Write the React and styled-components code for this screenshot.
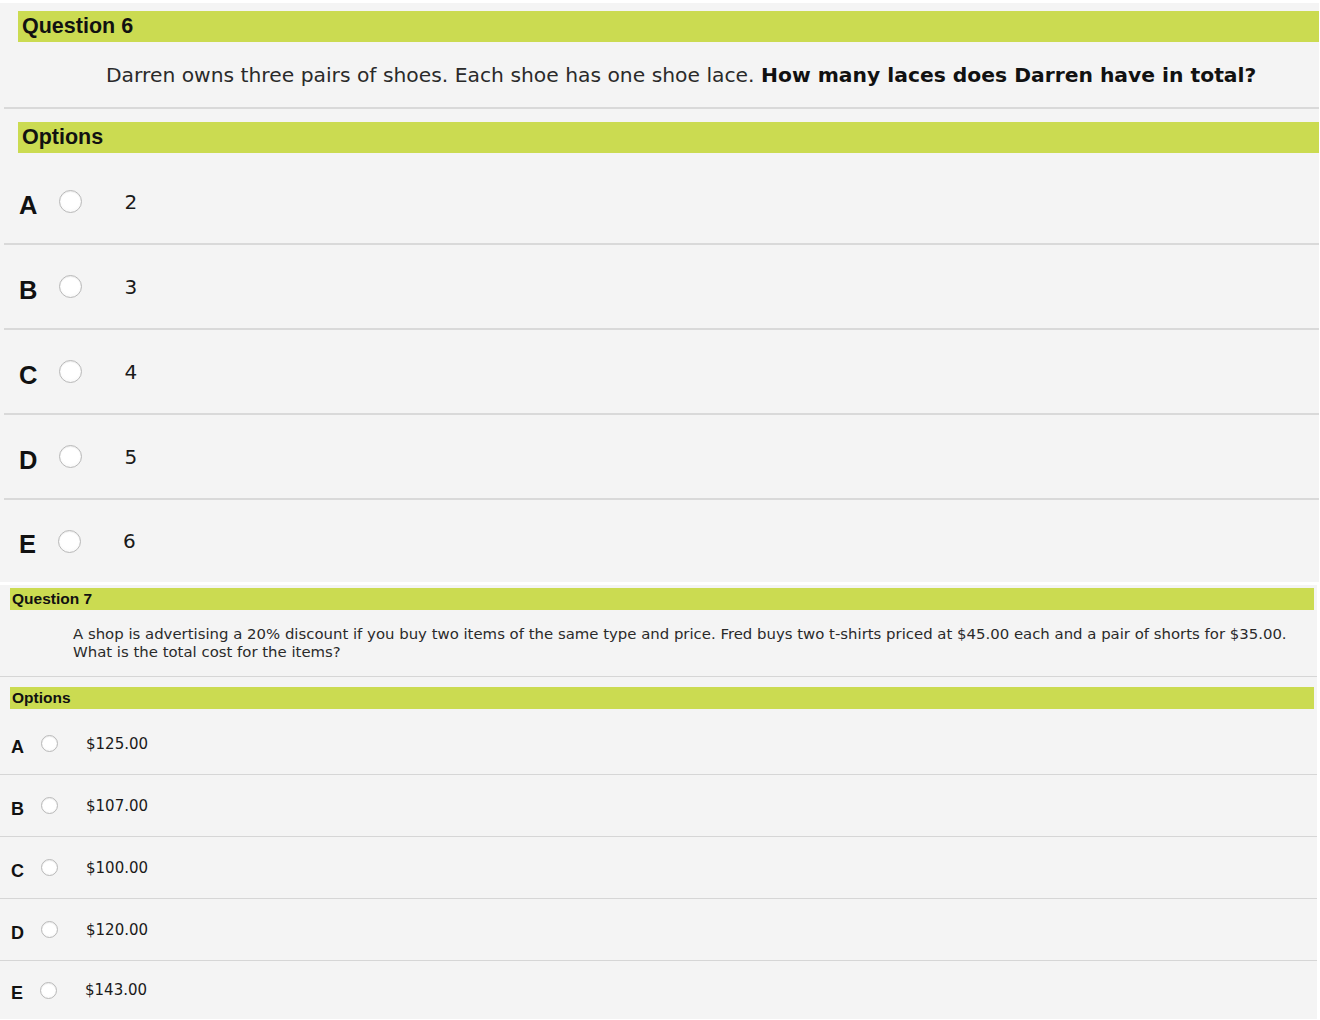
import React from "react";
import styled, { createGlobalStyle } from "styled-components";

const Global = createGlobalStyle`
  html, body { margin: 0; padding: 0; background: #ffffff; }
  body { width: 1320px; overflow: hidden; }
`;

const BIG = {
  right: 1, padTop: 8,
  barLeft: 18, barRight: 0, barH: 31, barFont: 21.5, barPad: 4,
  promptH: 67, promptPad: 106, promptFont: 20.3, promptLine: 24, promptPadT: 1, promptPadB: 0,
  lineInset: 4, lineW: 2, lineColor: "#d9d9d9",
  optGap: 13, listGap: 7,
  rowH: 85, lastRowH: 82,
  letterFont: 25.5, letterLeft: 19, letterShift: 8, letterGap: 22,
  radio: 23, radioGap: 42, valueFont: 20,
};

const SMALL = {
  right: 3, padTop: 3,
  barLeft: 10, barRight: 3, barH: 22, barFont: 15.5, barPad: 2,
  promptH: null, promptPad: 73, promptFont: 14.9, promptLine: 18, promptPadT: 15, promptPadB: 15,
  lineInset: 0, lineW: 1, lineColor: "#d6d6d6",
  optGap: 10, listGap: 4,
  rowH: 62, lastRowH: 58,
  letterFont: 18, letterLeft: 11, letterShift: 6, letterGap: 17,
  radio: 17, radioGap: 28, valueFont: 15,
};

const Page = styled.div`
  display: flex;
  flex-direction: column;
  gap: 3px;
  padding-top: 3px;
`;

const Panel = styled.section`
  background: #f4f4f4;
  margin-right: ${(p) => p.$m.right}px;
  padding-top: ${(p) => p.$m.padTop}px;
  display: flex;
  flex-direction: column;
`;

const Bar = styled.div`
  background: #cbdb51;
  height: ${(p) => p.$m.barH}px;
  margin-left: ${(p) => p.$m.barLeft}px;
  margin-right: ${(p) => p.$m.barRight}px;
  padding-left: ${(p) => p.$m.barPad}px;
  display: flex;
  align-items: center;
  font-family: "Liberation Sans", Arial, sans-serif;
  font-weight: 700;
  font-size: ${(p) => p.$m.barFont}px;
  color: #111;
`;

const PromptWrap = styled.div`
  margin-left: ${(p) => p.$m.lineInset}px;
  border-bottom: ${(p) => p.$m.lineW}px solid ${(p) => p.$m.lineColor};
  ${(p) => (p.$m.promptH ? `height: ${p.$m.promptH}px;` : "")}
  padding: ${(p) => p.$m.promptPadT}px 0 ${(p) => p.$m.promptPadB}px
    ${(p) => p.$m.promptPad - p.$m.lineInset}px;
  display: flex;
  align-items: center;
  box-sizing: border-box;
`;

const PromptText = styled.p`
  margin: 0;
  font-family: "DejaVu Sans", Verdana, sans-serif;
  font-size: ${(p) => p.$m.promptFont}px;
  line-height: ${(p) => p.$m.promptLine}px;
  color: #2a2a2a;
  white-space: nowrap;
  strong { color: #111; }
`;

const OptionsBar = styled(Bar)`
  margin-top: ${(p) => p.$m.optGap}px;
`;

const List = styled.div`
  margin-top: ${(p) => p.$m.listGap}px;
  display: flex;
  flex-direction: column;
`;

const Row = styled.label`
  display: flex;
  align-items: center;
  box-sizing: border-box;
  height: ${(p) => p.$m.rowH}px;
  margin-left: ${(p) => p.$m.lineInset}px;
  padding-left: ${(p) => p.$m.letterLeft - p.$m.lineInset}px;
  border-bottom: ${(p) => p.$m.lineW}px solid ${(p) => p.$m.lineColor};
  &:last-child {
    border-bottom: none;
    height: ${(p) => p.$m.lastRowH}px;
  }
`;

const Letter = styled.span`
  font-family: "Liberation Sans", Arial, sans-serif;
  font-weight: 700;
  font-size: ${(p) => p.$m.letterFont}px;
  color: #111;
  padding-top: ${(p) => p.$m.letterShift}px;
  margin-right: ${(p) => p.$m.letterGap}px;
  line-height: 1;
`;

const Radio = styled.span`
  width: ${(p) => p.$m.radio}px;
  height: ${(p) => p.$m.radio}px;
  box-sizing: border-box;
  border-radius: 50%;
  border: 1px solid #b9b9b9;
  background: radial-gradient(circle at 50% 40%, #ffffff 55%, #f1f1f1 100%);
  box-shadow: inset 0 1px 1px rgba(0, 0, 0, 0.08);
  margin-right: ${(p) => p.$m.radioGap}px;
  flex: none;
`;

const Value = styled.span`
  font-family: "DejaVu Sans", Verdana, sans-serif;
  font-size: ${(p) => p.$m.valueFont}px;
  color: #1a1a1a;
`;

function Question({ m, number, prompt, options }) {
  return (
    <Panel $m={m}>
      <Bar $m={m}>Question {number}</Bar>
      <PromptWrap $m={m}>
        <PromptText $m={m}>{prompt}</PromptText>
      </PromptWrap>
      <OptionsBar $m={m}>Options</OptionsBar>
      <List $m={m}>
        {options.map((o, i) => (
          <Row key={i} $m={m}>
            <Letter $m={m}>{"ABCDE"[i]}</Letter>
            <Radio $m={m} />
            <Value $m={m}>{o}</Value>
          </Row>
        ))}
      </List>
    </Panel>
  );
}

export default function App() {
  return (
    <>
      <Global />
      <Page>
        <Question
          m={BIG}
          number={6}
          prompt={
            <>
              Darren owns three pairs of shoes. Each shoe has one shoe lace.{" "}
              <strong>How many laces does Darren have in total?</strong>
            </>
          }
          options={["2", "3", "4", "5", "6"]}
        />
        <Question
          m={SMALL}
          number={7}
          prompt={
            <>
              A shop is advertising a 20% discount if you buy two items of the
              same type and price. Fred buys two t-shirts priced at $45.00 each
              and a pair of shorts for $35.00.
              <br />
              What is the total cost for the items?
            </>
          }
          options={["$125.00", "$107.00", "$100.00", "$120.00", "$143.00"]}
        />
      </Page>
    </>
  );
}
